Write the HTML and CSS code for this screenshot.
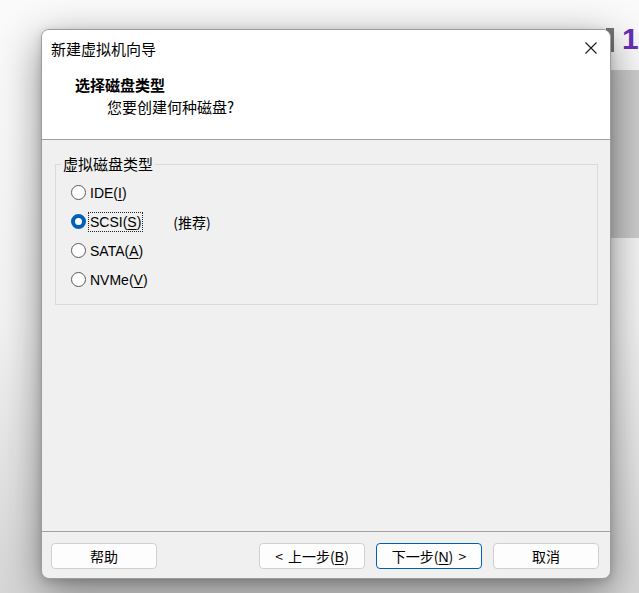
FILE: index.html
```html
<!DOCTYPE html>
<html lang="zh-CN">
<head>
<meta charset="utf-8">
<title>新建虚拟机向导</title>
<link rel="stylesheet" href="styles.css">
</head>
<body>
<div class="backdrop">
  <div class="brand-bar"></div>
  <div class="brand-num">1</div>
  <div class="band"></div>
</div>
<div class="dialog">
  <div class="top">
    <div class="titlebar">
      <span class="title">新建虚拟机向导</span>
      <span class="close" aria-label="关闭">
        <svg width="12" height="12" viewBox="0 0 12 12"><path d="M0.5 0.5 L11.5 11.5 M11.5 0.5 L0.5 11.5" stroke="#1a1a1a" stroke-width="1.1" fill="none"/></svg>
      </span>
    </div>
    <div class="header">
      <div class="h-title">选择磁盘类型</div>
      <div class="h-sub">您要创建何种磁盘?</div>
    </div>
  </div>
  <div class="body">
    <fieldset class="group">
      <legend>虚拟磁盘类型</legend>
      <div class="opt"><span class="radio"></span><span class="lbl">IDE(<u>I</u>)</span></div>
      <div class="opt"><span class="radio on"></span><span class="lbl focus">SCSI(<u>S</u>)</span><span class="rec">(推荐)</span></div>
      <div class="opt"><span class="radio"></span><span class="lbl">SATA(<u>A</u>)</span></div>
      <div class="opt"><span class="radio"></span><span class="lbl">NVMe(<u>V</u>)</span></div>
    </fieldset>
  </div>
  <div class="footer">
    <button class="btn">帮助</button>
    <span class="spacer"></span>
    <button class="btn">&lt; 上一步(<u>B</u>)</button>
    <button class="btn primary">下一步(<u>N</u>) &gt;</button>
    <button class="btn">取消</button>
  </div>
</div>
</body>
</html>
```
FILE: styles.css
```css
* { box-sizing: border-box; }
html, body { margin: 0; padding: 0; }
body {
  width: 639px;
  height: 593px;
  overflow: hidden;
  position: relative;
  background: linear-gradient(#fafafa 0, #f2f2f2 55%, #d6d6d6 100%);
  font-family: "Liberation Sans", "Noto Sans CJK SC", sans-serif;
  font-size: 14px;
  color: #000;
}
.backdrop { position: absolute; inset: 0; }
.brand-bar {
  position: absolute; left: 606px; top: 28px; width: 8px; height: 24px;
  background: #777;
}
.brand-num {
  position: absolute; left: 622px; top: 22px;
  font-family: "Liberation Sans", sans-serif; font-weight: bold; font-size: 30px; line-height: 34px;
  color: #6a2fb8;
}
.band {
  position: absolute; left: 560px; top: 70px; width: 79px; height: 168px;
  background: linear-gradient(90deg, #c0c0c0, #cccccc);
}
.dialog {
  position: absolute; left: 41px; top: 29px; width: 570px; height: 550px;
  border: 1px solid #9c9c9c;
  border-radius: 8px;
  overflow: hidden;
  background: #f0f0f0;
  display: flex; flex-direction: column;
  box-shadow: 0 12px 40px rgba(0,0,0,0.45), 0 2px 8px rgba(0,0,0,0.15);
}
.top {
  background: #fff;
  height: 110px;
  border-bottom: 1px solid #a0a0a0;
  font-family: "Noto Sans CJK SC", sans-serif;
}
.titlebar {
  height: 36px;
  display: flex; align-items: center; justify-content: space-between;
  padding: 0 13px 0 9px;
}
.title { font-size: 15px; line-height: 20px; padding-top: 1px; }
.close { display: flex; width: 12px; height: 12px; }
.header { padding-left: 33px; }
.h-title { font-size: 15px; font-weight: bold; line-height: 20px; padding-top: 9px; }
.h-sub { font-size: 15px; line-height: 20px; padding-left: 32px; padding-top: 2px; }
.body { flex: 1; padding: 15px 12px 0 13px; }
.group {
  margin: 0; padding: 5px 0 10px 0;
  border: 1px solid #dadada;
}
legend {
  margin-left: 5px; padding: 0 2px;
  font-family: "Noto Sans CJK SC", sans-serif; font-size: 15px; line-height: 18px;
}
.opt { height: 29px; display: flex; align-items: center; padding-left: 15px; }
.radio {
  width: 15px; height: 15px; border-radius: 50%;
  border: 1px solid #5a5a5a; background: #fff;
  margin-right: 2px; flex: none;
}
.radio.on {
  border: 4.5px solid #005fb8;
  background: #fff;
}
.lbl { padding: 0 1px; border: 1px dotted transparent; line-height: 18px; }
.lbl.focus { border-color: #222; }
.rec { margin-left: 30px; font-family: "Noto Sans CJK SC", sans-serif; font-size: 14px; }
u { text-decoration-thickness: 1px; text-underline-offset: 2px; }
.footer {
  height: 47px;
  border-top: 1px solid #a0a0a0;
  display: flex; align-items: flex-start;
  padding: 11px 11px 0 9px;
  gap: 11px;
}
.spacer { flex: 1; }
.btn {
  width: 106px; height: 26px;
  background: #fdfdfd;
  border: 1px solid #d0d0d0;
  border-radius: 4px;
  font-family: "Noto Sans CJK SC", sans-serif; font-size: 14px;
  color: #000; padding: 0;
  word-spacing: 2px;
}
.btn u { font-family: "Liberation Sans", sans-serif; }
.btn.primary { border-color: #005fb8; }
```
